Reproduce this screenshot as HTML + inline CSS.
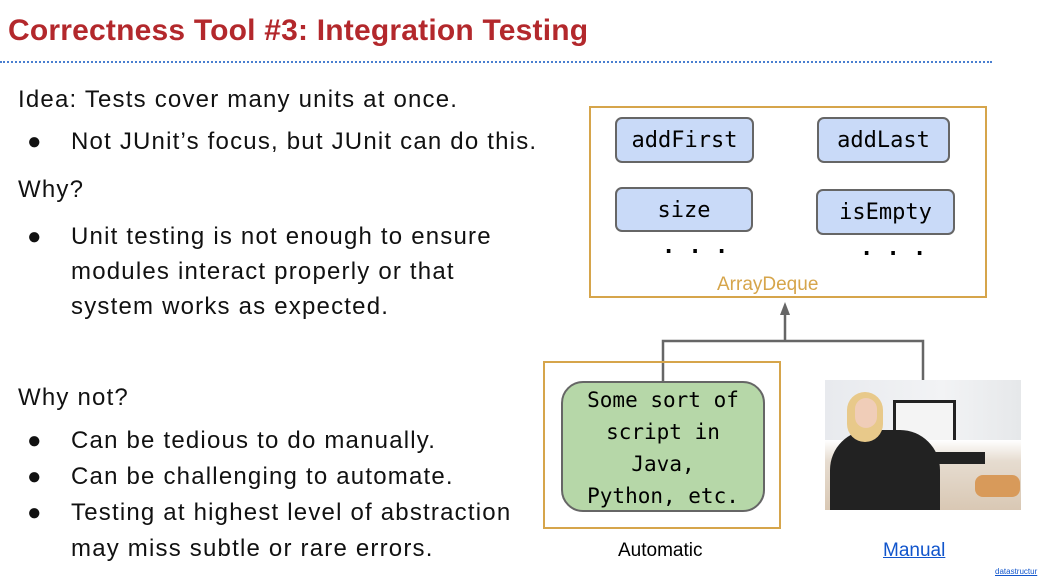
<!DOCTYPE html>
<html><head><style>
body{margin:0;width:1040px;height:582px;background:#fff;position:relative;overflow:hidden;font-family:"Liberation Sans",sans-serif;}
.a{position:absolute;white-space:nowrap}
.t{font-size:24px;color:#111;line-height:28px;letter-spacing:1.2px}
.m{font-family:"DejaVu Sans Mono","Liberation Mono",monospace}
.b{position:absolute;background:#c9daf8;border:2px solid #666;border-radius:7px;font-size:22px;text-align:center;box-sizing:border-box}
</style></head><body>
<div class="a" style="left:8px;top:14px;font-size:30px;font-weight:bold;color:#b3282c;letter-spacing:0.2px">Correctness Tool #3: Integration Testing</div>
<div class="a" style="left:0;top:61px;width:992px;border-top:2px dotted #4a7fd0"></div>
<div class="a t" style="left:18px;top:86px">Idea: Tests cover many units at once.</div>
<div class="a t" style="left:27px;top:128px">●</div><div class="a t" style="left:71px;top:128px">Not JUnit’s focus, but JUnit can do this.</div>
<div class="a t" style="left:18px;top:176px">Why?</div>
<div class="a t" style="left:27px;top:223px">●</div><div class="a t" style="left:71px;top:223px">Unit testing is not enough to ensure</div>
<div class="a t" style="left:71px;top:258px">modules interact properly or that</div>
<div class="a t" style="left:71px;top:293px">system works as expected.</div>
<div class="a t" style="left:18px;top:384px">Why not?</div>
<div class="a t" style="left:27px;top:427px">●</div><div class="a t" style="left:71px;top:427px">Can be tedious to do manually.</div>
<div class="a t" style="left:27px;top:463px">●</div><div class="a t" style="left:71px;top:463px">Can be challenging to automate.</div>
<div class="a t" style="left:27px;top:499px">●</div><div class="a t" style="left:71px;top:499px">Testing at highest level of abstraction</div>
<div class="a t" style="left:71px;top:535px">may miss subtle or rare errors.</div>

<div class="a" style="left:589px;top:106px;width:398px;height:192px;border:2px solid #d6a54b;box-sizing:border-box"></div>
<div class="b m" style="left:615px;top:117px;width:139px;height:46px;line-height:44px">addFirst</div>
<div class="b m" style="left:817px;top:117px;width:133px;height:46px;line-height:44px">addLast</div>
<div class="b m" style="left:615px;top:187px;width:138px;height:45px;line-height:43px">size</div>
<div class="b m" style="left:816px;top:189px;width:139px;height:46px;line-height:44px">isEmpty</div>
<div class="a m" style="left:662px;top:234px;font-size:22px;font-weight:bold">. . .</div>
<div class="a m" style="left:860px;top:236px;font-size:22px;font-weight:bold">. . .</div>
<div class="a" style="left:717px;top:274px;font-size:19px;color:#d6a54b">ArrayDeque</div>

<svg class="a" style="left:0;top:0" width="1040" height="582">
<path d="M785 340V312M663 382V341H923V381" stroke="#666" stroke-width="2.5" fill="none"/>
<polygon points="785,302 780,315 790,315" fill="#666"/>
</svg>
<div class="a" style="left:543px;top:361px;width:238px;height:168px;border:2px solid #d6a54b;box-sizing:border-box"></div>
<div class="a m" style="left:561px;top:381px;width:204px;height:131px;background:#b6d7a8;border:2px solid #666;border-radius:22px;box-sizing:border-box;font-size:21px;line-height:32px;text-align:center;padding-top:1px;white-space:normal">Some sort of<br>script in<br>Java,<br>Python, etc.</div>
<div class="a" style="left:825px;top:380px;width:196px;height:130px;background:linear-gradient(90deg,#e8eaee,#f2f3f5 60%,#e6e8ea);overflow:hidden">
<div class="a" style="left:68px;top:20px;width:63px;height:48px;background:#222"></div>
<div class="a" style="left:71px;top:23px;width:57px;height:42px;background:#f4f4f4"></div>
<div class="a" style="left:0;top:60px;width:196px;height:70px;background:linear-gradient(#fff 0,#e6dcd0 30%,#d9c8b4)"></div>
<div class="a" style="left:5px;top:50px;width:110px;height:80px;background:#222;border-radius:40px 40px 0 0"></div>
<div class="a" style="left:22px;top:12px;width:36px;height:50px;background:#e8c98a;border-radius:18px"></div>
<div class="a" style="left:30px;top:18px;width:22px;height:30px;background:#f0cdb8;border-radius:11px"></div>
<div class="a" style="left:100px;top:72px;width:60px;height:12px;background:#222"></div>
<div class="a" style="left:150px;top:95px;width:45px;height:22px;background:#d89a5a;border-radius:8px"></div>
</div>
<div class="a" style="left:618px;top:540px;font-size:19px;color:#000">Automatic</div>
<div class="a" style="left:883px;top:540px;font-size:19px;color:#1155cc;text-decoration:underline">Manual</div>
<div class="a" style="left:995px;top:567px;font-size:8px;color:#1155cc;text-decoration:underline">datastructur</div>
</body></html>
